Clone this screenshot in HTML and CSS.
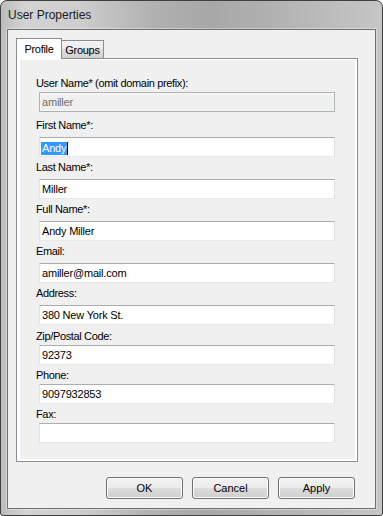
FILE: index.html
```html
<!DOCTYPE html>
<html lang="en">
<head>
  <meta charset="UTF-8" />
  <title>User Properties</title>
  <link rel="stylesheet" href="styles.css">
</head>
<body>

<div class="window">
  <div class="titlebar">User Properties</div>

  <div class="client">
    <div class="tab-strip">
      <div class="tab active">Profile</div>
      <div class="tab">Groups</div>
    </div>

    <div class="tab-panel">
      <div class="page">
        <div class="field compact first">
          <label>User Name* (omit domain prefix):</label>
          <div class="textbox disabled">amiller</div>
        </div>
        <div class="field wide">
          <label>First Name*:</label>
          <div class="textbox"><span class="selected">Andy</span><span class="caret"></span></div>
        </div>
        <div class="field">
          <label>Last Name*:</label>
          <div class="textbox">Miller</div>
        </div>
        <div class="field">
          <label>Full Name*:</label>
          <div class="textbox">Andy Miller</div>
        </div>
        <div class="field">
          <label>Email:</label>
          <div class="textbox">amiller@mail.com</div>
        </div>
        <div class="field">
          <label>Address:</label>
          <div class="textbox">380 New York St.</div>
        </div>
        <div class="field compact loose">
          <label>Zip/Postal Code:</label>
          <div class="textbox">92373</div>
        </div>
        <div class="field compact">
          <label>Phone:</label>
          <div class="textbox">9097932853</div>
        </div>
        <div class="field compact">
          <label>Fax:</label>
          <div class="textbox"></div>
        </div>
      </div>
    </div>

    <div class="buttons">
      <button class="btn">OK</button>
      <button class="btn">Cancel</button>
      <button class="btn">Apply</button>
    </div>
  </div>
</div>

</body>
</html>
```

FILE: styles.css
```css
* {
  box-sizing: border-box;
}

body {
  margin: 0;
  background-color: #fff;
  font-family: "Liberation Sans", Arial, sans-serif;
  font-size: 11px;
  color: #000;
}

.window {
  width: 383px;
  height: 516px;
  display: flex;
  flex-direction: column;
  padding: 0 6px 6px;
  border: 1px solid #3f3f3f;
  border-radius: 7px 7px 3px 3px;
  background: linear-gradient(to right, #bcbcbc 0%, #d3d3d3 6%, #cecece 20%, #b1b1b1 40%, #a7a7a7 55%, #b4b4b4 75%, #c6c6c6 100%);
}

.titlebar {
  height: 28px;
  line-height: 28px;
  padding-left: 1px;
  font-size: 12px;
  color: #1a1a1a;
}

.client {
  flex: 1;
  display: flex;
  flex-direction: column;
  padding: 8px 17px 0 8px;
  background-color: #f0f0f0;
  border: 1px solid #6f6f6f;
  box-shadow: 0 0 0 1px rgba(255,255,255,0.35);
}

/* tabs */

.tab-strip {
  display: flex;
  align-items: flex-end;
  height: 20px;
}

.tab {
  width: 43px;
  height: 18px;
  margin-left: -1px;
  line-height: 19px;
  text-align: center;
  border: 1px solid #898c95;
  border-bottom: none;
  background: linear-gradient(#f3f3f3 0%, #ebebeb 50%, #dddddd 50%, #d2d2d2 100%);
  letter-spacing: -0.3px;
}

.tab.active {
  width: 46px;
  height: 21px;
  margin-left: 0;
  margin-bottom: -1px;
  line-height: 20px;
  background: #fff;
  position: relative;
  z-index: 1;
}

.tab-panel {
  height: 404px;
  padding: 1px 2px 2px 3px;
  background-color: #fff;
  border: 1px solid #898c95;
}

.page {
  height: 100%;
  padding: 16px 0 0 16px;
  background-color: #f0f0f0;
}

/* fields */

.field {
  margin-top: 3px;
}

.field.first {
  margin-top: 0;
}

.field.wide {
  margin-top: 6px;
}

.field.loose {
  margin-top: 4px;
}

.field label {
  display: block;
  height: 14px;
  line-height: 14px;
  margin-bottom: 5px;
  letter-spacing: -0.35px;
}

.field.compact label {
  margin-bottom: 2px;
}

.textbox {
  width: 296px;
  height: 20px;
  margin-left: 3px;
  padding-left: 2px;
  line-height: 18px;
  background-color: #fff;
  border: 1px solid;
  border-color: #abadb3 #dbdfe6 #e3e9ef #e2e3ea;
  white-space: nowrap;
  letter-spacing: -0.2px;
}

.textbox.disabled {
  background-color: #f0f0f0;
  border-color: #adb2b5;
  box-shadow: inset 0 0 0 1px #f7f7f7;
  color: #6d6d6d;
}

.selected {
  display: inline-block;
  height: 13px;
  line-height: 13px;
  margin-left: -1px;
  padding: 0 1px;
  vertical-align: middle;
  background-color: #3399ff;
  color: #fff;
}

.caret {
  display: inline-block;
  width: 1px;
  height: 13px;
  vertical-align: middle;
  background-color: #000;
}

/* dialog buttons */

.buttons {
  display: flex;
  justify-content: flex-end;
  gap: 9px;
  margin-top: 15px;
  padding-right: 3px;
}

.btn {
  width: 77px;
  height: 22px;
  padding: 0;
  font: inherit;
  color: #000;
  border: 1px solid #707070;
  border-radius: 3px;
  background: linear-gradient(#f2f2f2 0%, #ebebeb 50%, #dddddd 50%, #cfcfcf 100%);
  box-shadow: inset 0 0 0 1px #fcfcfc;
}
```
